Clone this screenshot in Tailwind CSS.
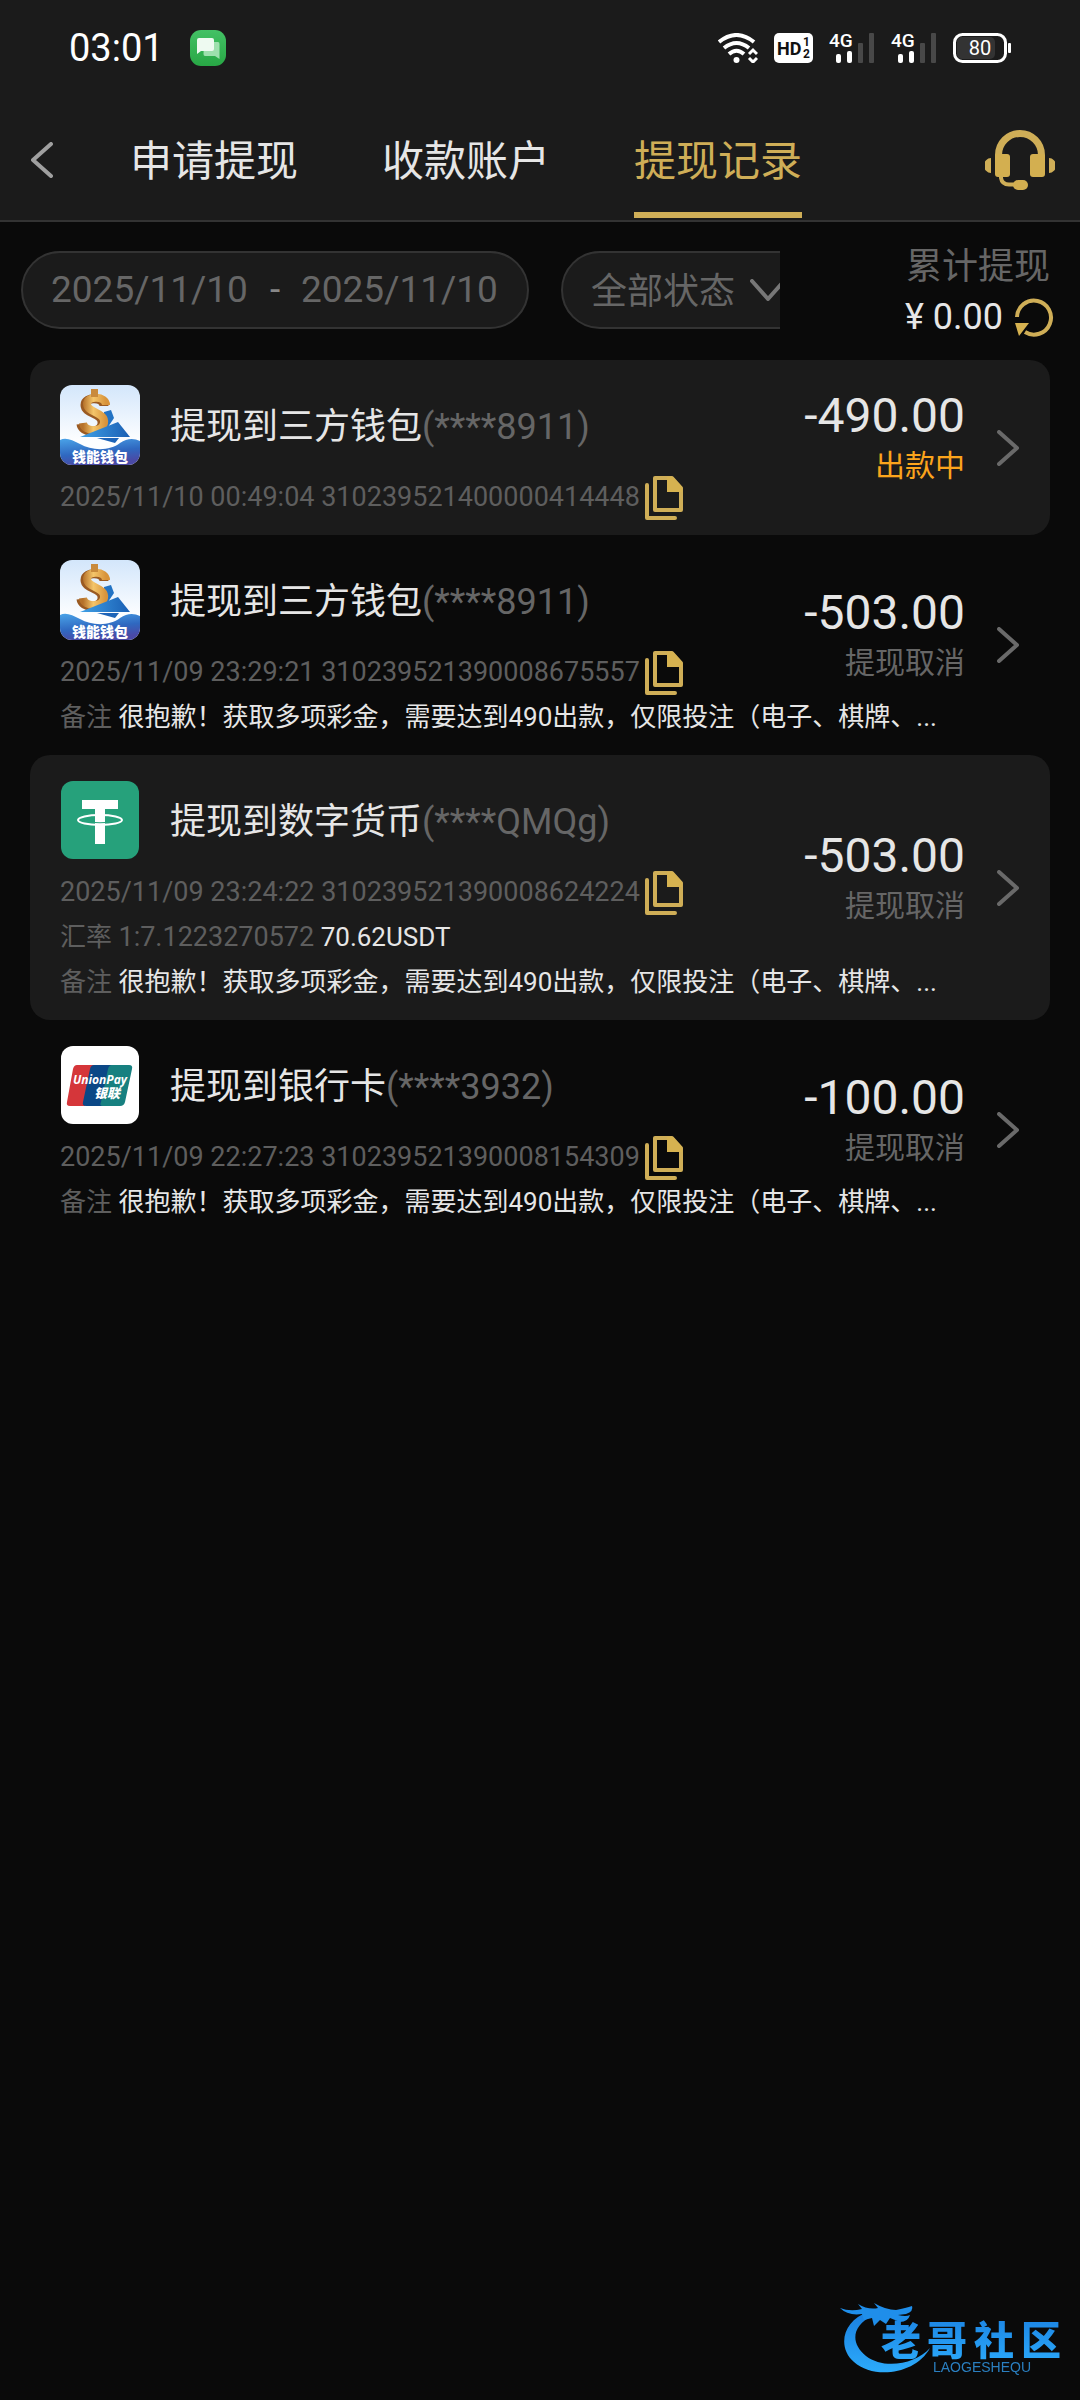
<!DOCTYPE html>
<html lang="zh-CN">
<head>
<meta charset="utf-8">
<meta name="viewport" content="width=device-width, initial-scale=1">
<title>提现记录</title>
<script src="https://cdn.jsdelivr.net/npm/@tailwindcss/browser@4"></script>
</head>
<body class="bg-[#0a0a0a] text-[#e6e6e6] font-['Roboto','Noto_Sans_CJK_SC',sans-serif]">

<svg class="absolute size-0" aria-hidden="true">
  <defs>
    <linearGradient id="sky" x1="0" y1="0" x2="0" y2="1"><stop offset="0" stop-color="#d3e6fb"/><stop offset="0.7" stop-color="#fdfeff"/></linearGradient>
    <linearGradient id="sea" x1="0" y1="0" x2="0.3" y2="1"><stop offset="0" stop-color="#4aa3e8"/><stop offset="0.6" stop-color="#2f68c0"/><stop offset="1" stop-color="#4a4aa6"/></linearGradient>
    <linearGradient id="gold" x1="0" y1="0" x2="1" y2="0"><stop offset="0" stop-color="#b5712a"/><stop offset="0.45" stop-color="#f4c56a"/><stop offset="1" stop-color="#d8933a"/></linearGradient>
    <linearGradient id="wing" x1="0" y1="0" x2="1" y2="0"><stop offset="0" stop-color="#3fa0e6"/><stop offset="1" stop-color="#1a5fb4"/></linearGradient>
    <linearGradient id="leaf" x1="0" y1="0" x2="0" y2="1"><stop offset="0" stop-color="#43c165"/><stop offset="1" stop-color="#28a745"/></linearGradient>
    <linearGradient id="brand" x1="0" y1="0" x2="0" y2="1"><stop offset="0" stop-color="#1a7fe0"/><stop offset="1" stop-color="#2cabfb"/></linearGradient>
  </defs>
  <symbol id="i-copy" viewBox="0 0 38 44">
    <path d="M2 9V42H30" fill="none" stroke="#cfae57" stroke-width="4" stroke-linejoin="round" stroke-linecap="round"/>
    <path d="M10 2H27L36 12V34H10Z" fill="none" stroke="#cfae57" stroke-width="4" stroke-linejoin="round"/>
    <path d="M22 1H28L37 11V16H22Z" fill="#d6b250"/>
  </symbol>
  <symbol id="i-next" viewBox="0 0 22 36">
    <path d="M2 2L20 18L2 34" fill="none" stroke="#6a6a6a" stroke-width="4" stroke-linecap="round" stroke-linejoin="round"/>
  </symbol>
  <symbol id="i-wallet" viewBox="0 0 80 80">
    <rect width="80" height="80" rx="12" fill="url(#sky)"/>
    <path d="M44 27L51 25L54 33L44 48Z" fill="#2273c4"/>
    <path d="M46 20C46 11 27 10 27 19C27 28 46 27 44 38C42 48 24 47 23 38" fill="none" stroke="#9a5a22" stroke-width="9" transform="translate(-2 1)"/>
    <path d="M46 20C46 11 27 10 27 19C27 28 46 27 44 38C42 48 24 47 23 38" fill="none" stroke="url(#gold)" stroke-width="8"/>
    <path d="M31 4H38V12H31Z" fill="#c98a3c"/>
    <path d="M20 52L58 37L70 52Z" fill="url(#wing)"/>
    <path d="M37 53H59L55 58Z" fill="#1d64b8"/>
    <path d="M0 55C6 52 12 55 20 59C32 66 50 66 60 58C67 53 74 53 80 56V68A12 12 0 0 1 68 80H12A12 12 0 0 1 0 68Z" fill="url(#sea)"/>
  </symbol>
  <symbol id="i-signal" viewBox="0 0 46 30">
    <rect x="7" y="21" width="5" height="9" rx="2" fill="#fff"/>
    <rect x="18" y="18" width="5" height="12" rx="2" fill="#fff"/>
    <rect x="29" y="10" width="5" height="20" rx="1" fill="#484848"/>
    <rect x="40" y="0" width="5" height="30" rx="1" fill="#484848"/>
  </symbol>
</svg>

<header class="border-b-2 border-[#333] bg-[#1b1b1b]">
  <div class="mb-1 flex h-24 items-center justify-between pl-[69px] pr-[69px]">
    <div class="flex items-center gap-[26px]">
      <span class="text-[38px] leading-none text-white">03:01</span>
      <svg class="size-9" viewBox="0 0 36 36" role="img" aria-label="短信">
        <rect width="36" height="36" rx="11" fill="url(#leaf)"/>
        <path d="M14 12H28Q29.500 12 29.500 14V29L25 26H15Q13.500 26 13.500 24Z" fill="#9ee0ae"/>
        <path d="M9 8H22Q24 8 24 10V19Q24 21 22 21H11L7 24V10Q7 8 9 8Z" fill="#eefaf1"/>
      </svg>
    </div>
    <div class="flex items-center gap-4">
      <svg class="h-[30px] w-[40px]" viewBox="0 0 40 30" role="img" aria-label="Wi-Fi">
        <g fill="none" stroke="#fff" stroke-width="4">
          <path d="M1 9Q18.500 -5 36 9"/>
          <path d="M6 15Q18.500 5 31 15"/>
          <path d="M11 21Q18.500 14.500 26 21"/>
        </g>
        <circle cx="18.500" cy="27" r="3" fill="#fff"/>
        <path d="M31 21L35 17L39 21M31 25L35 29L39 25" fill="none" stroke="#fff" stroke-width="3"/>
      </svg>
      <svg class="h-[30px] w-[39px]" viewBox="0 0 39 30" role="img" aria-label="HD 1 2">
        <rect width="39" height="30" rx="5" fill="#fff"/>
        <text x="3" y="22" font-family="Roboto" font-weight="700" font-size="18" fill="#111">HD</text>
        <text x="29" y="13" font-family="Roboto" font-weight="700" font-size="12" fill="#111">1</text>
        <text x="29" y="25" font-family="Roboto" font-weight="700" font-size="12" fill="#111">2</text>
      </svg>
      <svg class="h-[30px] w-[46px]" viewBox="0 0 46 30" role="img" aria-label="4G"><use href="#i-signal"/><text x="0" y="14" font-family="Roboto" font-weight="500" font-size="19" fill="#fff">4G</text></svg>
      <svg class="h-[30px] w-[46px]" viewBox="0 0 46 30" role="img" aria-label="4G"><use href="#i-signal"/><text x="0" y="14" font-family="Roboto" font-weight="500" font-size="19" fill="#fff">4G</text></svg>
      <svg class="h-[30px] w-[58px]" viewBox="0 0 58 30" role="img" aria-label="80%">
        <rect x="4" y="4" width="38" height="22" rx="5" fill="#333"/>
        <rect x="1.500" y="1.500" width="51" height="27" rx="8" fill="none" stroke="#fff" stroke-width="3"/>
        <rect x="55" y="10" width="3" height="10" rx="1" fill="#fff"/>
        <text x="27" y="22" text-anchor="middle" font-family="Roboto" font-size="20" fill="#fff">80</text>
      </svg>
    </div>
  </div>
  <div class="flex h-[120px] items-center pr-[25px]">
    <button type="button" aria-label="返回" class="flex w-[88px] pl-[31px]">
      <svg class="h-9 w-[22px]" viewBox="0 0 22 36"><path d="M20 2L2 18L20 34" fill="none" stroke="#a0a0a0" stroke-width="4" stroke-linecap="round" stroke-linejoin="round"/></svg>
    </button>
    <nav class="flex h-full flex-1 text-[42px]">
      <a href="#apply" class="flex items-center px-[42px] pt-0.5">申请提现</a>
      <a href="#accounts" class="flex items-center px-[42px] pt-0.5">收款账户</a>
      <a href="#records" aria-current="page" class="relative flex items-center px-[42px] pt-0.5 text-[#cfae57]">提现记录<span class="absolute inset-x-[42px] bottom-0.5 h-1.5 bg-[#cfae57]"></span></a>
    </nav>
    <button type="button" aria-label="客服">
      <svg class="h-[60px] w-[70px]" viewBox="0 0 70 60">
        <path d="M13.500 28V25A21.500 21.500 0 0 1 56.500 25V28" fill="none" stroke="#cfae57" stroke-width="7"/>
        <rect x="10" y="24" width="15" height="23" rx="3" fill="#d3af50"/>
        <rect x="45" y="24" width="15" height="23" rx="3" fill="#d3af50"/>
        <path d="M6 28V43A7 7.500 0 0 1 6 28ZM64 28V43A7 7.500 0 0 0 64 28Z" fill="#cfae57"/>
        <path d="M16 46V48Q17 54.500 24 54.500H31" fill="none" stroke="#cfae57" stroke-width="4"/>
        <rect x="28" y="50" width="15" height="10" rx="5" fill="#d3af50"/>
      </svg>
    </button>
  </div>
</header>

<main>
  <section class="flex items-center pb-[19px] pt-[17px]">
    <div class="flex flex-1 gap-8 overflow-hidden pl-[21px] text-[#666]">
      <div class="flex h-[78px] w-[508px] shrink-0 items-center justify-between rounded-full border-2 border-[#333] bg-[#1b1b1b] px-7 text-[37px]">
        <input type="text" aria-label="开始日期" value="2025/11/10" class="w-[198px]">
        <span class="text-[#888]">-</span>
        <input type="text" aria-label="结束日期" value="2025/11/10" class="w-[198px]">
      </div>
      <div class="flex h-[78px] w-[255px] shrink-0 items-center rounded-full border-2 border-[#333] bg-[#1b1b1b] pl-7 text-4xl">
        <select aria-label="状态" class="w-[159px] appearance-none pt-1"><option>全部状态</option></select>
        <svg class="h-[22px] w-9" viewBox="0 0 36 22" aria-hidden="true"><path d="M2 2L18 20L34 2" fill="none" stroke="#777" stroke-width="4" stroke-linecap="round" stroke-linejoin="round"/></svg>
      </div>
    </div>
    <div class="w-[300px] pr-[26px] pt-0.5 text-right text-4xl">
      <p class="pr-1 leading-[52px] text-[#666]">累计提现</p>
      <p class="flex items-center justify-end gap-[11px] leading-[48px]">¥ 0.00
        <button type="button" aria-label="刷新">
          <svg class="size-10" viewBox="0 0 40 40">
            <path d="M3 20A17 17 0 1 1 11 35" fill="none" stroke="#cfae57" stroke-width="4"/>
            <path d="M1 26H15L5 39Z" fill="#d6b250"/>
          </svg>
        </button>
      </p>
    </div>
  </section>

  <ul class="px-[30px]">
    <li class="flex items-center rounded-[20px] bg-[#1b1b1b] pl-[30px] pr-[31px]">
      <div class="w-0 flex-1 whitespace-nowrap pb-[15px] pt-[25px]">
        <div class="mb-[10px] flex h-20 items-center gap-[30px] text-4xl">
          <svg class="size-20" viewBox="0 0 80 80"><use href="#i-wallet"/><text x="12" y="77" font-family="Noto Sans CJK SC" font-weight="900" font-size="14" fill="#fff">钱能钱包</text></svg>
          <h2 class="pt-1">提现到三方钱包<span class="text-[#666]">(****8911)</span></h2>
        </div>
        <div class="flex h-[45px] items-center gap-[5px] text-[27px] text-[#5e5e5e]">
          <span>2025/11/10 00:49:04 310239521400000414448</span>
          <button type="button" aria-label="复制单号"><svg class="h-11 w-[38px]"><use href="#i-copy"/></svg></button>
        </div>
      </div>
      <div class="mr-8 pb-5 text-right">
        <p class="text-5xl leading-[56px]">-490.00</p>
        <p class="text-3xl leading-[44px] text-[#fba41c]">出款中</p>
      </div>
      <button type="button" aria-label="查看详情"><svg class="h-9 w-[22px]"><use href="#i-next"/></svg></button>
    </li>

    <li class="flex items-center pl-[30px] pr-[31px]">
      <div class="w-0 flex-1 whitespace-nowrap pb-[15px] pt-[25px]">
        <div class="mb-[10px] flex h-20 items-center gap-[30px] text-4xl">
          <svg class="size-20" viewBox="0 0 80 80"><use href="#i-wallet"/><text x="12" y="77" font-family="Noto Sans CJK SC" font-weight="900" font-size="14" fill="#fff">钱能钱包</text></svg>
          <h2 class="pt-1">提现到三方钱包<span class="text-[#666]">(****8911)</span></h2>
        </div>
        <div class="flex h-[45px] items-center gap-[5px] text-[27px] text-[#5e5e5e]">
          <span>2025/11/09 23:29:21 310239521390008675557</span>
          <button type="button" aria-label="复制单号"><svg class="h-11 w-[38px]"><use href="#i-copy"/></svg></button>
        </div>
        <p class="text-[26px] leading-[45px]"><span class="text-[#5e5e5e]">备注</span> 很抱歉！获取多项彩金，需要达到490出款，仅限投注（电子、棋牌、...</p>
      </div>
      <div class="mr-8 pb-5 text-right">
        <p class="text-5xl leading-[56px]">-503.00</p>
        <p class="text-3xl leading-[44px] text-[#666]">提现取消</p>
      </div>
      <button type="button" aria-label="查看详情"><svg class="h-9 w-[22px]"><use href="#i-next"/></svg></button>
    </li>

    <li class="flex items-center rounded-[20px] bg-[#1b1b1b] pl-[30px] pr-[31px]">
      <div class="w-0 flex-1 whitespace-nowrap pb-[15px] pt-[25px]">
        <div class="mb-[10px] flex h-20 items-center gap-[30px] text-4xl">
          <svg class="size-20" viewBox="0 0 80 80" role="img" aria-label="USDT">
            <rect x="1" y="1" width="78" height="78" rx="12" fill="#26a17b"/>
            <path d="M22 20H58V29H45V64H35V29H22Z" fill="#fff"/>
            <ellipse cx="40" cy="40" rx="22" ry="5" fill="none" stroke="#fff" stroke-width="2"/>
            <path d="M35 42.500Q40 43 45 42.500" fill="none" stroke="#26a17b" stroke-width="1"/>
          </svg>
          <h2 class="pt-1">提现到数字货币<span class="text-[#666]">(****QMQg)</span></h2>
        </div>
        <div class="flex h-[45px] items-center gap-[5px] text-[27px] text-[#5e5e5e]">
          <span>2025/11/09 23:24:22 310239521390008624224</span>
          <button type="button" aria-label="复制单号"><svg class="h-11 w-[38px]"><use href="#i-copy"/></svg></button>
        </div>
        <p class="text-[26px] leading-[45px]"><span class="text-[#5e5e5e]">汇率 <span class="text-[27px]">1:7.1223270572</span></span> 70.62USDT</p>
        <p class="text-[26px] leading-[45px]"><span class="text-[#5e5e5e]">备注</span> 很抱歉！获取多项彩金，需要达到490出款，仅限投注（电子、棋牌、...</p>
      </div>
      <div class="mr-8 pb-5 text-right">
        <p class="text-5xl leading-[56px]">-503.00</p>
        <p class="text-3xl leading-[44px] text-[#666]">提现取消</p>
      </div>
      <button type="button" aria-label="查看详情"><svg class="h-9 w-[22px]"><use href="#i-next"/></svg></button>
    </li>

    <li class="flex items-center pl-[30px] pr-[31px]">
      <div class="w-0 flex-1 whitespace-nowrap pb-[15px] pt-[25px]">
        <div class="mb-[10px] flex h-20 items-center gap-[30px] text-4xl">
          <svg class="size-20" viewBox="0 0 80 80" role="img" aria-label="UnionPay 银联">
            <rect x="1" y="1" width="78" height="78" rx="12" fill="#fff"/>
            <path d="M17 20H34L25 61H10Q6 61 7 57L13 24Q14 20 17 20Z" fill="#d5363a"/>
            <path d="M34 20H52L43 61H26Q22 61 23 57L30 24Q31 20 34 20Z" fill="#0b4786"/>
            <path d="M52 20H69Q73 20 72 24L65 57Q64 61 60 61H43Q39 61 41 57L48 24Q49 20 52 20Z" fill="#178080"/>
            <text x="13" y="39" font-family="Open Sans" font-weight="700" font-style="italic" font-size="12" fill="#fff">UnionPay</text>
            <text x="34" y="53" font-family="Noto Sans CJK SC" font-weight="900" font-style="italic" font-size="13" fill="#fff">银联</text>
          </svg>
          <h2 class="pt-1">提现到银行卡<span class="text-[#666]">(****3932)</span></h2>
        </div>
        <div class="flex h-[45px] items-center gap-[5px] text-[27px] text-[#5e5e5e]">
          <span>2025/11/09 22:27:23 310239521390008154309</span>
          <button type="button" aria-label="复制单号"><svg class="h-11 w-[38px]"><use href="#i-copy"/></svg></button>
        </div>
        <p class="text-[26px] leading-[45px]"><span class="text-[#5e5e5e]">备注</span> 很抱歉！获取多项彩金，需要达到490出款，仅限投注（电子、棋牌、...</p>
      </div>
      <div class="mr-8 pb-5 text-right">
        <p class="text-5xl leading-[56px]">-100.00</p>
        <p class="text-3xl leading-[44px] text-[#666]">提现取消</p>
      </div>
      <button type="button" aria-label="查看详情"><svg class="h-9 w-[22px]"><use href="#i-next"/></svg></button>
    </li>
  </ul>
</main>

<svg class="fixed bottom-6 right-4 h-[76px] w-[224px]" viewBox="0 0 224 76" role="img" aria-label="老哥社区 LAOGESHEQU">
  <path d="M28 12C4 20 -4 46 14 62C34 80 76 74 90 48C76 64 44 70 26 56C10 43 12 26 32 16Z" fill="url(#brand)"/>
  <path d="M0 8Q10 12 22 9L18 4Q28 10 38 8L34 3Q46 10 56 10Q66 8 72 6Q74 11 66 14L58 15Q66 17 70 15Q68 22 60 22L50 18L46 24L40 20L34 26L32 18L24 20L22 14Q8 16 0 8Z" fill="#1f8eea"/>
  <text y="55" font-family="Noto Sans CJK SC" font-weight="900" font-size="40" fill="url(#brand)"><tspan x="41">老</tspan><tspan x="87">哥</tspan><tspan x="134">社</tspan><tspan x="181">区</tspan></text>
  <text x="93" y="72" font-family="Liberation Sans" font-size="14" fill="#2a7fc0">LAOGESHEQU</text>
</svg>
</body>
</html>
